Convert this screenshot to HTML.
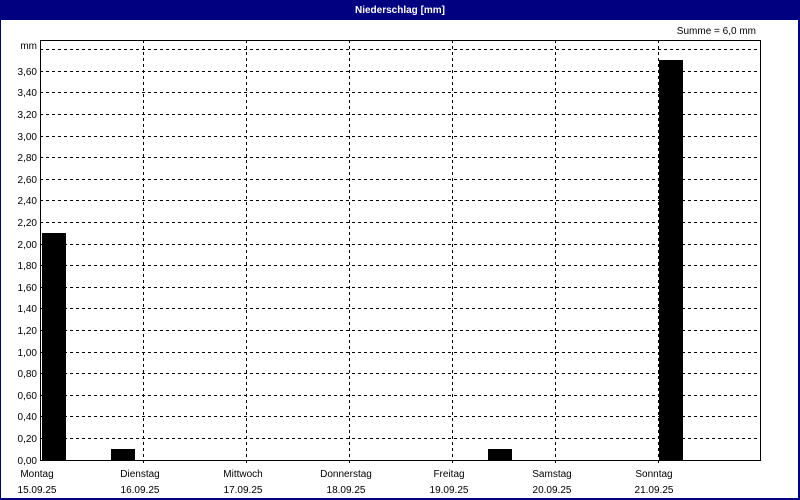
<!DOCTYPE html>
<html><head><meta charset="utf-8"><style>
html,body{margin:0;padding:0;background:#fff}
svg{display:block}
text{font-family:"Liberation Sans",sans-serif;font-size:10px;fill:#000}
</style></head><body>
<svg width="800" height="500" viewBox="0 0 800 500" xmlns="http://www.w3.org/2000/svg">
<rect x="0" y="0" width="800" height="500" fill="#000080"/>
<rect x="1" y="20" width="797" height="478" fill="#fff"/>
<text x="400" y="13" text-anchor="middle" style="fill:#fff;font-weight:bold">Niederschlag [mm]</text>
<text x="756" y="34" text-anchor="end">Summe = 6,0 mm</text>
<g stroke="#000" stroke-width="1" stroke-dasharray="3,3" shape-rendering="crispEdges">
<line x1="40" x2="760" y1="49.5" y2="49.5"/>
<line x1="40" x2="760" y1="71.5" y2="71.5"/>
<line x1="40" x2="760" y1="92.5" y2="92.5"/>
<line x1="40" x2="760" y1="114.5" y2="114.5"/>
<line x1="40" x2="760" y1="136.5" y2="136.5"/>
<line x1="40" x2="760" y1="157.5" y2="157.5"/>
<line x1="40" x2="760" y1="179.5" y2="179.5"/>
<line x1="40" x2="760" y1="200.5" y2="200.5"/>
<line x1="40" x2="760" y1="222.5" y2="222.5"/>
<line x1="40" x2="760" y1="244.5" y2="244.5"/>
<line x1="40" x2="760" y1="265.5" y2="265.5"/>
<line x1="40" x2="760" y1="287.5" y2="287.5"/>
<line x1="40" x2="760" y1="308.5" y2="308.5"/>
<line x1="40" x2="760" y1="330.5" y2="330.5"/>
<line x1="40" x2="760" y1="352.5" y2="352.5"/>
<line x1="40" x2="760" y1="373.5" y2="373.5"/>
<line x1="40" x2="760" y1="395.5" y2="395.5"/>
<line x1="40" x2="760" y1="416.5" y2="416.5"/>
<line x1="40" x2="760" y1="438.5" y2="438.5"/>
<line x1="143.5" x2="143.5" y1="40" y2="465"/>
<line x1="246.5" x2="246.5" y1="40" y2="465"/>
<line x1="349.5" x2="349.5" y1="40" y2="465"/>
<line x1="452.5" x2="452.5" y1="40" y2="465"/>
<line x1="555.5" x2="555.5" y1="40" y2="465"/>
<line x1="658.5" x2="658.5" y1="40" y2="465"/>
</g>
<g fill="#000" shape-rendering="crispEdges">
<rect x="42" y="233" width="24" height="227"/>
<rect x="111" y="449" width="24" height="11"/>
<rect x="488" y="449" width="24" height="11"/>
<rect x="659" y="60" width="24" height="400"/>
</g>
<rect x="40.5" y="40.5" width="720" height="420" fill="none" stroke="#000" stroke-width="1" shape-rendering="crispEdges"/>
<g text-anchor="end">
<text x="37" y="49">mm</text>
<text x="37" y="75">3,60</text>
<text x="37" y="96">3,40</text>
<text x="37" y="118">3,20</text>
<text x="37" y="140">3,00</text>
<text x="37" y="161">2,80</text>
<text x="37" y="183">2,60</text>
<text x="37" y="204">2,40</text>
<text x="37" y="226">2,20</text>
<text x="37" y="248">2,00</text>
<text x="37" y="269">1,80</text>
<text x="37" y="291">1,60</text>
<text x="37" y="312">1,40</text>
<text x="37" y="334">1,20</text>
<text x="37" y="356">1,00</text>
<text x="37" y="377">0,80</text>
<text x="37" y="399">0,60</text>
<text x="37" y="420">0,40</text>
<text x="37" y="442">0,20</text>
<text x="37" y="464">0,00</text>
</g>
<g text-anchor="middle">
<text x="37" y="477">Montag</text><text x="37" y="493">15.09.25</text>
<text x="140" y="477">Dienstag</text><text x="140" y="493">16.09.25</text>
<text x="243" y="477">Mittwoch</text><text x="243" y="493">17.09.25</text>
<text x="346" y="477">Donnerstag</text><text x="346" y="493">18.09.25</text>
<text x="449" y="477">Freitag</text><text x="449" y="493">19.09.25</text>
<text x="552" y="477">Samstag</text><text x="552" y="493">20.09.25</text>
<text x="654" y="477">Sonntag</text><text x="654" y="493">21.09.25</text>
</g>
</svg>
</body></html>
